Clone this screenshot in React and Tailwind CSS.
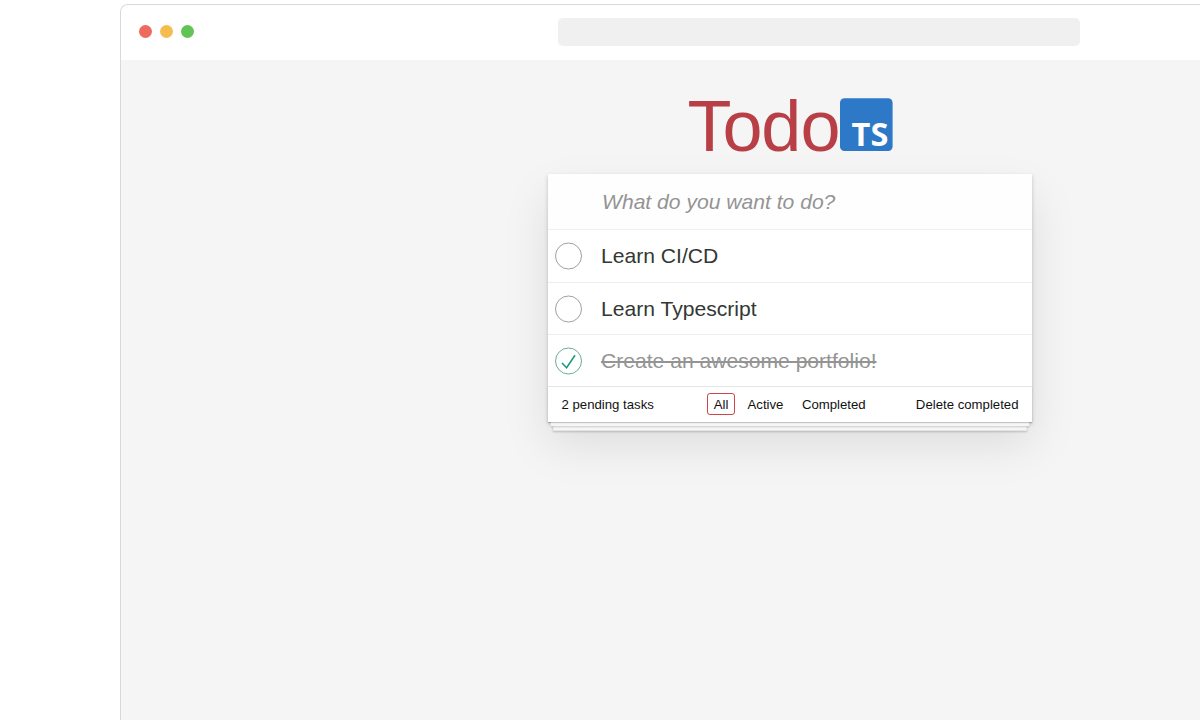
const tasks = [
  { title: 'Learn CI/CD', done: false },
  { title: 'Learn Typescript', done: false },
  { title: 'Create an awesome portfolio!', done: true },
];

const rowClasses = [
  'flex h-[53px] items-center border-b border-[#ededed] pb-px pl-[6px]',
  'flex h-[52px] items-center border-b border-[#ededed] pl-[6px]',
  'flex h-[51px] items-center pl-[6px]',
];

function Logo() {
  return (
    <svg width="208" height="84" viewBox="0 0 208 84" role="img" aria-label="Todo TS">
      <text x="-0.4 34.4 73.2 112.4" y="67" fontSize="72" fill="#b83f45" fontFamily="'Liberation Sans', Arial, sans-serif">
        Todo
      </text>
      <rect x="152" y="14.2" width="52.6" height="52.8" rx="4.5" fill="#2d79c7" />
      <text x="163.6 182.6" y="62.2" fontSize="32.5" fontWeight="700" fill="#fff" fontFamily="'Open Sans', sans-serif">
        TS
      </text>
    </svg>
  );
}

function Toggle({ done }) {
  return (
    <svg className="shrink-0" width="28" height="28" viewBox="0 0 28 28" fill="none">
      <circle cx="14.5" cy="14" r="13" stroke={done ? '#59a193' : '#949494'} strokeWidth="0.9" />
      {done && <path d="M8 16 L12.6 20.8 L21 8.2" stroke="#1f9b80" strokeWidth="1.6" />}
    </svg>
  );
}

function Task({ title, done, rowClass }) {
  return (
    <li className={rowClass}>
      <Toggle done={done} />
      <span
        className={
          done
            ? 'ml-[19px] text-[21.1px] leading-[25px] text-[#949494] line-through'
            : 'ml-[19px] text-[21.1px] leading-[25px] text-[#333833]'
        }
      >
        {title}
      </span>
    </li>
  );
}

export default function App() {
  return (
    <div className="h-[720px] w-[1200px] overflow-hidden bg-white pl-[120px] pt-1 font-['Liberation_Sans',Arial,sans-serif]">
      <div className="flex h-[716px] flex-col overflow-hidden rounded-tl-lg border-l border-t border-[#d9d9d9]">
        <div className="flex h-[55px] shrink-0 items-center bg-white pb-[2px] pl-[18px]">
          <div className="flex gap-2">
            <span className="h-[13px] w-[13px] rounded-full bg-[#ee6a5f]" />
            <span className="h-[13px] w-[13px] rounded-full bg-[#f5bd4f]" />
            <span className="h-[13px] w-[13px] rounded-full bg-[#61c454]" />
          </div>
          <div className="ml-[364px] h-7 w-[522px] rounded-[5px] bg-[#f0f0f0]" />
        </div>
        <main className="grow bg-[#f5f5f5] pl-[427px] pt-6">
          <div className="pl-[140px]">
            <Logo />
          </div>
          <section className="mt-[6px] h-[248px] w-[483.5px] bg-white shadow-[0_2px_4px_rgba(0,0,0,0.2),0_22px_44px_rgba(0,0,0,0.1)]">
            <input
              className="block h-14 w-full border-b border-[#f0f0f0] bg-[#fefefe] pl-[54px] text-[21.1px] italic outline-none placeholder:text-[#949494]"
              placeholder="What do you want to do?"
            />
            <ul>
              {tasks.map((task, i) => (
                <Task key={task.title} title={task.title} done={task.done} rowClass={rowClasses[i]} />
              ))}
            </ul>
            <footer className="flex h-9 items-center border-t border-[#e6e6e6] bg-white pb-px pl-[13.5px] pr-[13px] text-[13.2px] text-[#111111] shadow-[0_1px_1px_rgba(0,0,0,0.2),0_7px_0_-2.64px_#f6f6f6,0_8px_1px_-2.64px_rgba(0,0,0,0.2),0_14px_0_-5.3px_#f6f6f6,0_15px_2px_-5.3px_rgba(0,0,0,0.2)]">
              <span className="w-[145.5px] pt-[2px]">2 pending tasks</span>
              <nav className="flex items-center">
                <button className="h-[22px] w-7 rounded-[3px] border border-[#ce4646] pt-px">All</button>
                <button className="ml-[12.5px] pt-[2px]">Active</button>
                <button className="ml-[18.5px] pt-[2px]">Completed</button>
              </nav>
              <button className="ml-auto pt-[2px]">Delete completed</button>
            </footer>
          </section>
        </main>
      </div>
    </div>
  );
}
